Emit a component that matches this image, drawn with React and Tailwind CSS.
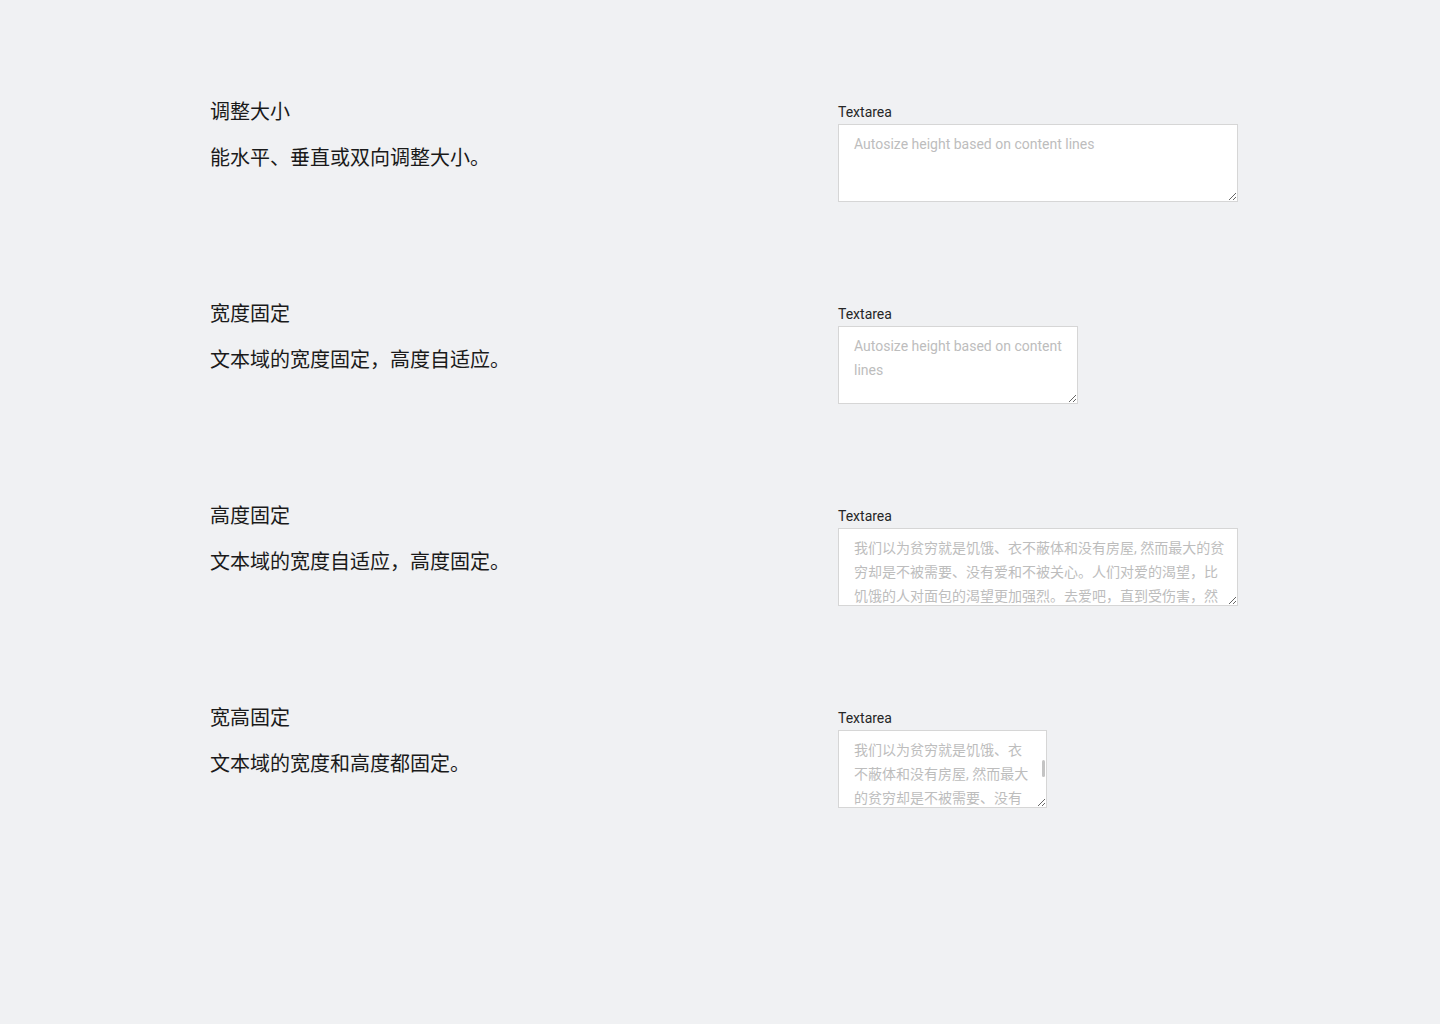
import React from 'react';

const longText =
  '我们以为贫穷就是饥饿、衣不蔽体和没有房屋, 然而最大的贫穷却是不被需要、没有爱和不被关心。人们对爱的渴望，比饥饿的人对面包的渴望更加强烈。去爱吧，直到受伤害，然后你会发现不再有伤害，只有更多的爱。';

const sections = [
  {
    title: '调整大小',
    desc: '能水平、垂直或双向调整大小。',
    width: 'w-[400px]',
    placeholder: 'Autosize height based on content lines',
  },
  {
    title: '宽度固定',
    desc: '文本域的宽度固定，高度自适应。',
    width: 'w-[240px]',
    placeholder: 'Autosize height based on content lines',
  },
  {
    title: '高度固定',
    desc: '文本域的宽度自适应，高度固定。',
    width: 'w-[400px]',
    placeholder: longText,
  },
  {
    title: '宽高固定',
    desc: '文本域的宽度和高度都固定。',
    width: 'w-[209px]',
    placeholder: longText,
    thumb: true,
  },
];

const Field = ({ width, placeholder, thumb }) => (
  <div className="flex flex-col">
    <label className="text-[14px] leading-[24px] text-[#262626]">Textarea</label>
    <div className={`relative ${width}`}>
      <textarea
        placeholder={placeholder}
        className="block w-full h-[78px] bg-white border border-[#d6d6d6] pl-[15px] pr-[12px] pt-[7px] pb-[8px] text-[14px] leading-[24px] text-[#333] placeholder:text-[#bdbdbd] outline-none resize overflow-hidden"
        style={{ fontFamily: 'Roboto, "Noto Sans CJK SC", sans-serif' }}
      />
      {thumb && (
        <div className="absolute right-[2px] top-[30px] w-[3px] h-[17px] rounded-full bg-[#c4c4c4]" />
      )}
    </div>
  </div>
);

export default function App() {
  return (
    <div
      className="min-h-[1024px] w-full bg-[#f0f1f3] pt-[100px] pl-[210px]"
      style={{ fontFamily: 'Roboto, "Noto Sans CJK SC", sans-serif' }}
    >
      <div className="flex flex-col gap-[100px]">
        {sections.map((s) => (
          <div key={s.title} className="flex items-start">
            <div className="w-[628px] flex flex-col pt-[1px]">
              <h2 className="text-[20px] leading-[22px] text-[#1a1a1a] font-normal">{s.title}</h2>
              <p className="mt-[24px] text-[20px] leading-[22px] text-[#1a1a1a]">{s.desc}</p>
            </div>
            <Field width={s.width} placeholder={s.placeholder} thumb={s.thumb} />
          </div>
        ))}
      </div>
    </div>
  );
}
